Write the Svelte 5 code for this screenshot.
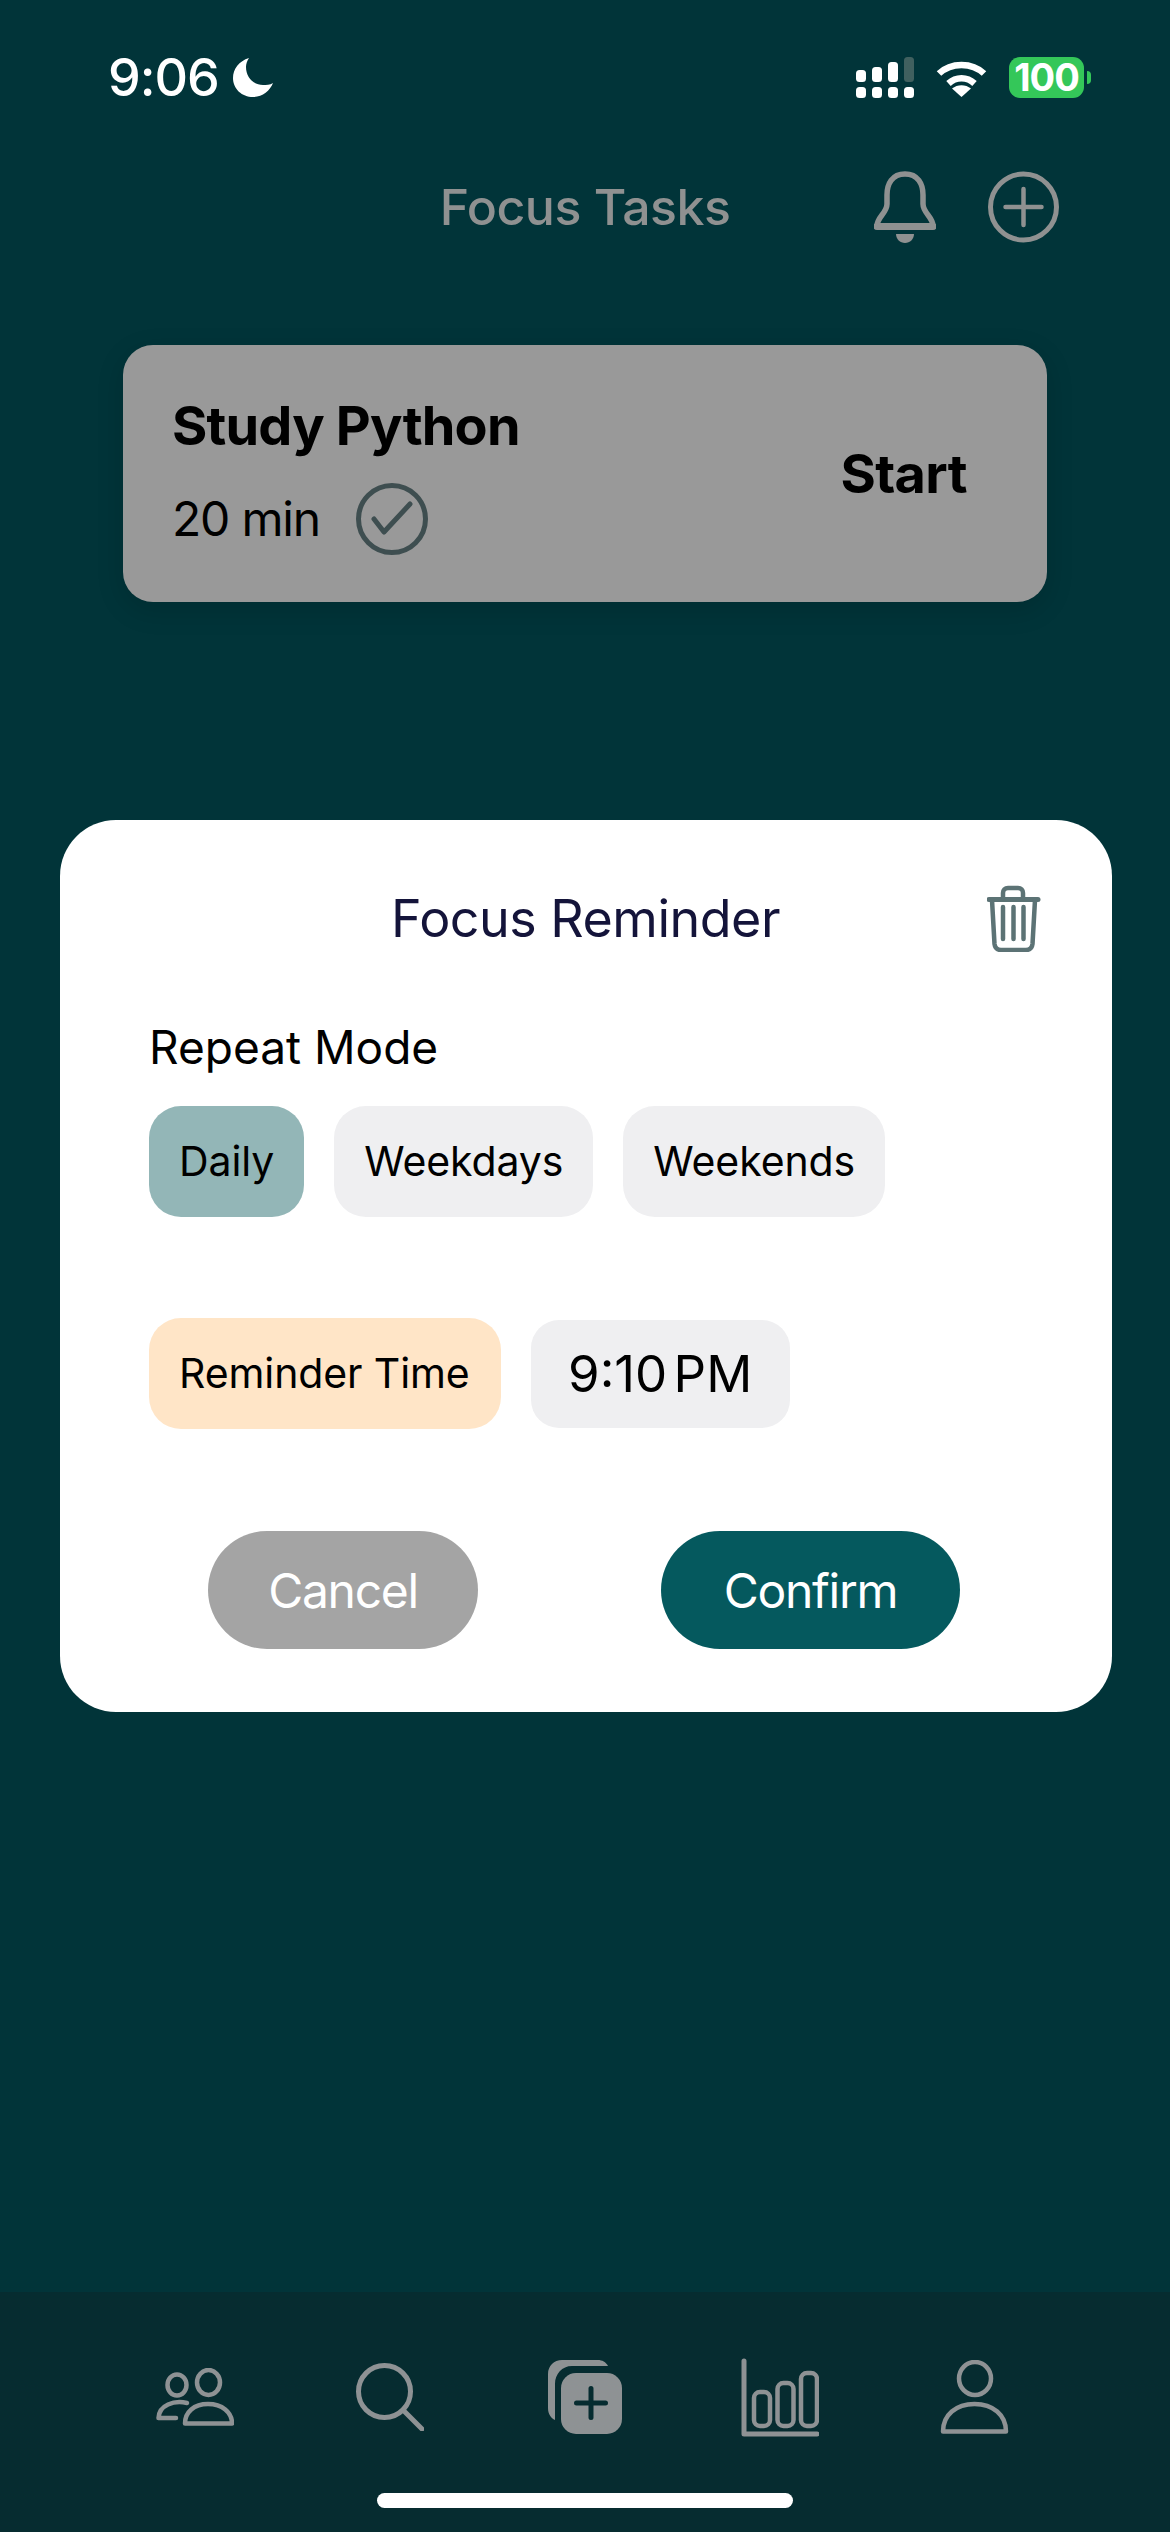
<script>
  const repeatModes = [
    { label: 'Daily', active: true },
    { label: 'Weekdays', active: false },
    { label: 'Weekends', active: false }
  ];
</script>

<div class="screen">
  <div class="status">
    <div class="status-left">
      <span class="clock">9:06</span>
      <svg class="moon" width="40" height="39" viewBox="0 0 40 39"><path d="M16 0C6 3 0 11 0 20c0 11 9 19 20 19 9 0 17-6 20-14-3 2-7 2-10 2-10 0-17-8-17-18 0-3 1-6 3-9z" fill="#fff"/></svg>
    </div>
    <div class="status-right">
      <svg width="58" height="41" viewBox="0 0 58 41" fill="#fff">
        <rect x="0" y="13" width="10" height="12" rx="3.5"/><rect x="16" y="10" width="10" height="15" rx="3.5"/><rect x="32" y="5" width="10" height="20" rx="3.5"/><rect x="48" y="0" width="10" height="25" rx="3.5" fill="#40605f"/>
        <rect x="0" y="30" width="10" height="11" rx="3.5"/><rect x="16" y="30" width="10" height="11" rx="3.5"/><rect x="32" y="30" width="10" height="11" rx="3.5"/><rect x="48" y="30" width="10" height="11" rx="3.5"/>
      </svg>
      <svg class="wifi" width="51" height="38" viewBox="0 0 51 38">
        <path d="M3 14.5C15 3 36 3 48 14.5" fill="none" stroke="#fff" stroke-width="6.5" stroke-linejoin="round"/>
        <path d="M12.5 24.5C20 17.5 31 17.5 38.5 24.5" fill="none" stroke="#fff" stroke-width="6.5"/>
        <path d="M25.5 38L16 29.5C21.5 25 29.5 25 35 29.5z" fill="#fff"/>
      </svg>
      <div class="battery-wrap">
        <div class="battery">100</div>
        <div class="nub"></div>
      </div>
    </div>
  </div>

  <header class="header">
    <div></div>
    <h1>Focus Tasks</h1>
    <div class="header-actions">
      <svg width="62" height="72" viewBox="0 0 62 72" fill="none" stroke="#8f9191" stroke-width="5.5" stroke-linejoin="round">
        <path d="M31 3C18 3 13 13 13 24V33C13 42 3 46 3 55H59C59 46 49 42 49 33V24C49 13 44 3 31 3Z"/>
        <path d="M3 55.5H59" stroke-width="7" stroke-linecap="round"/>
        <path d="M22 63H40C40 68 36 72 31 72S22 68 22 63Z" fill="#8f9191" stroke="none"/>
      </svg>
      <svg width="71" height="72" viewBox="0 0 71 72" fill="none" stroke="#8f9191">
        <circle cx="35.5" cy="36" r="33" stroke-width="5"/>
        <path d="M35.5 18V54M17.5 36H53.5" stroke-width="4.5" stroke-linecap="round"/>
      </svg>
    </div>
  </header>

  <section class="card">
    <div class="card-info">
      <div class="task-name">Study Python</div>
      <div class="task-meta">
        <span>20 min</span>
        <svg width="72" height="72" viewBox="0 0 72 72" fill="none" stroke="#3e4e50">
          <circle cx="36" cy="36" r="33.5" stroke-width="5"/>
          <path d="M18 36L28 49L54 21" stroke-width="5" stroke-linecap="round" stroke-linejoin="round"/>
        </svg>
      </div>
    </div>
    <div class="start">Start</div>
  </section>

  <section class="modal">
    <div class="modal-head">
      <div></div>
      <h2>Focus Reminder</h2>
      <svg class="trash" width="54" height="67" viewBox="27 15 54 67" fill="none" stroke="#5c7375" stroke-linecap="round" stroke-linejoin="round">
        <path d="M29 29.5H78" stroke-width="5"/>
        <path d="M43 28V23C43 20 45 18 48 18H58C61 18 63 20 63 23V28" stroke-width="4.5"/>
        <path d="M32 30L34.5 74C35 78 37 80 41 80H66C70 80 72 78 72.500 74L75 30" stroke-width="4.5"/>
        <path d="M43 37V69M53.500 37V69M63.500 37V69" stroke-width="4.5"/>
      </svg>
    </div>

    <div class="label">Repeat Mode</div>
    <div class="chips">
      {#each repeatModes as mode}
        <div class="chip" class:active={mode.active}>{mode.label}</div>
      {/each}
    </div>

    <div class="time-row">
      <div class="chip peach">Reminder Time</div>
      <div class="time">9:10 PM</div>
    </div>

    <div class="buttons">
      <div class="btn cancel">Cancel</div>
      <div class="btn confirm">Confirm</div>
    </div>
  </section>

  <nav class="tabbar">
    <div class="tabs">
      <svg width="78" height="58" viewBox="0 0 78 58" fill="none" stroke="#8e9294" stroke-width="4.5" stroke-linecap="round" stroke-linejoin="round">
        <ellipse cx="52.500" cy="14.500" rx="11.500" ry="12.500"/>
        <ellipse cx="21" cy="17" rx="9.500" ry="10.500"/>
        <path d="M29 55.500C29 44 38 36 52 36S76 44 76 55.500Z"/>
        <path d="M31 35C18 32 3 37 2.500 50H20"/>
      </svg>
      <svg width="68" height="68" viewBox="0 0 68 68" fill="none" stroke="#8e9294" stroke-width="5" stroke-linecap="round">
        <circle cx="28.500" cy="28.500" r="26"/>
        <path d="M47 47L66 66"/>
      </svg>
      <svg width="74" height="74" viewBox="0 0 74 74">
        <path d="M60 6C58 2 54 0 50 0H14C6 0 0 6 0 14V48C0 54 3 58 7 60V24C7 14 14 6 24 6Z" fill="#8e9294"/>
        <rect x="13" y="13" width="61" height="61" rx="15" fill="#8e9294"/>
        <path d="M43 28.500V57.500M28.500 43H57.500" stroke="#062c30" stroke-width="5" stroke-linecap="round"/>
      </svg>
      <svg width="78" height="79" viewBox="0 0 78 79" fill="none" stroke="#8e9294" stroke-width="4.500" stroke-linecap="round" stroke-linejoin="round">
        <path d="M3 3V76H76" stroke-width="5"/>
        <rect x="13" y="34" width="16" height="34" rx="6"/>
        <rect x="36.500" y="25" width="16" height="43" rx="6"/>
        <rect x="60" y="15" width="16" height="53" rx="6"/>
      </svg>
      <svg width="69" height="74" viewBox="0 0 69 74" fill="none" stroke="#8e9294" stroke-width="4.500" stroke-linejoin="round">
        <ellipse cx="35" cy="18.500" rx="16" ry="16.500"/>
        <path d="M3 71.500C3 55 16 44 34.500 44S66 55 66 71.500Z"/>
      </svg>
    </div>
    <div class="home"></div>
  </nav>
</div>

<style>
  :global(body) {
    margin: 0;
    background: #013439;
  }
  .screen {
    width: 1170px;
    height: 2532px;
    background: #013439;
    display: flex;
    flex-direction: column;
    font-family: Inter, "Liberation Sans", sans-serif;
    color: #000;
    overflow: hidden;
  }
  svg { display: block; flex: none; }
  .status {
    height: 150px;
    box-sizing: border-box;
    padding: 57px 79px 0 108px;
    display: flex;
    justify-content: space-between;
    align-items: flex-start;
  }
  .status-left {
    display: flex;
    align-items: center;
    gap: 14px;
    height: 41px;
  }
  .clock {
    font-size: 52px;
    font-weight: 500;
    color: #fff;
    line-height: 41px;
    letter-spacing: -1px;
  }
  .status-right {
    display: flex;
    align-items: center;
    height: 41px;
    gap: 22px;
  }
  .battery-wrap {
    display: flex;
    align-items: center;
    gap: 3px;
  }
  .battery {
    width: 75px;
    height: 41px;
    border-radius: 11px;
    background: #34c759;
    color: #fff;
    font-size: 38px;
    font-weight: 700;
    line-height: 41px;
    text-align: center;
    letter-spacing: -1px;
  }
  .nub {
    width: 4px;
    height: 13px;
    background: #34c759;
    border-radius: 0 6px 6px 0;
  }
  .header {
    margin-top: 20px;
    height: 73px;
    padding-right: 111px;
    padding-left: 111px;
    display: grid;
    grid-template-columns: 1fr auto 1fr;
    align-items: center;
  }
  h1 {
    margin: 0;
    font-size: 50px;
    font-weight: 500;
    color: #8f9191;
    white-space: nowrap;
    letter-spacing: -0.5px;
  }
  .header-actions {
    display: flex;
    justify-content: flex-end;
    gap: 52px;
    align-items: center;
  }
  .card {
    margin: 102px 123px 0;
    height: 257px;
    box-sizing: border-box;
    padding: 0 80px 0 50px;
    background: #999999;
    border-radius: 30px;
    box-shadow: 0 8px 28px rgba(0, 0, 0, 0.14);
    display: flex;
    justify-content: space-between;
    align-items: center;
  }
  .card-info {
    display: flex;
    flex-direction: column;
    gap: 24px;
  }
  .task-name {
    font-size: 54px;
    font-weight: 700;
    line-height: 66px;
    letter-spacing: -0.8px;
    margin-left: -1px;
  }
  .task-meta {
    display: flex;
    align-items: center;
    gap: 36px;
    font-size: 48px;
    height: 72px;
    letter-spacing: -1.2px;
    margin-left: -1px;
  }
  .start {
    font-size: 54px;
    font-weight: 700;
    letter-spacing: -0.6px;
  }
  .modal {
    margin: 218px 58px 0 60px;
    height: 892px;
    box-sizing: border-box;
    padding: 65px 71px 63px 89px;
    background: #fff;
    border-radius: 56px;
  }
  .modal-head {
    display: grid;
    grid-template-columns: 242px auto 1fr;
    align-items: center;
    height: 67px;
  }
  .trash {
    justify-self: end;
  }
  h2 {
    margin: 0;
    font-size: 52px;
    font-weight: 400;
    color: #14143a;
    white-space: nowrap;
    letter-spacing: -0.5px;
  }
  .label {
    margin-top: 65px;
    font-size: 46px;
    line-height: 60px;
  }
  .chips {
    margin-top: 29px;
    display: flex;
    gap: 30px;
  }
  .chip {
    height: 111px;
    box-sizing: border-box;
    padding: 0 30px 2px;
    display: flex;
    align-items: center;
    border-radius: 32px;
    background: #efeff1;
    font-size: 41px;
    white-space: nowrap;
    letter-spacing: -0.1px;
  }
  .chip.active {
    background: #93b6b7;
  }
  .chip.peach {
    background: #ffe5c7;
    padding-right: 31px;
  }
  .time-row {
    margin-top: 101px;
    display: flex;
    gap: 30px;
    align-items: center;
  }
  .time {
    height: 108px;
    width: 259px;
    display: flex;
    align-items: center;
    justify-content: center;
    border-radius: 28px;
    background: #efeff1;
    font-size: 51px;
    word-spacing: -8px;
    white-space: nowrap;
  }
  .buttons {
    margin-top: 102px;
    padding-left: 59px;
    display: flex;
    gap: 183px;
  }
  .btn {
    height: 118px;
    border-radius: 59px;
    display: flex;
    align-items: center;
    justify-content: center;
    color: #fff;
    font-size: 48px;
    letter-spacing: -1.3px;
  }
  .cancel {
    width: 270px;
    background: #a4a4a4;
  }
  .confirm {
    width: 299px;
    background: #05595e;
  }
  .tabbar {
    margin-top: auto;
    height: 240px;
    box-sizing: border-box;
    background: #062c30;
    padding-top: 65px;
  }
  .tabs {
    display: grid;
    grid-template-columns: repeat(5, 195px);
    padding-left: 97px;
    height: 80px;
    align-items: center;
    justify-items: center;
  }
  .home {
    width: 416px;
    height: 15px;
    margin: 56px auto 0;
    border-radius: 8px;
    background: #fff;
  }
</style>
